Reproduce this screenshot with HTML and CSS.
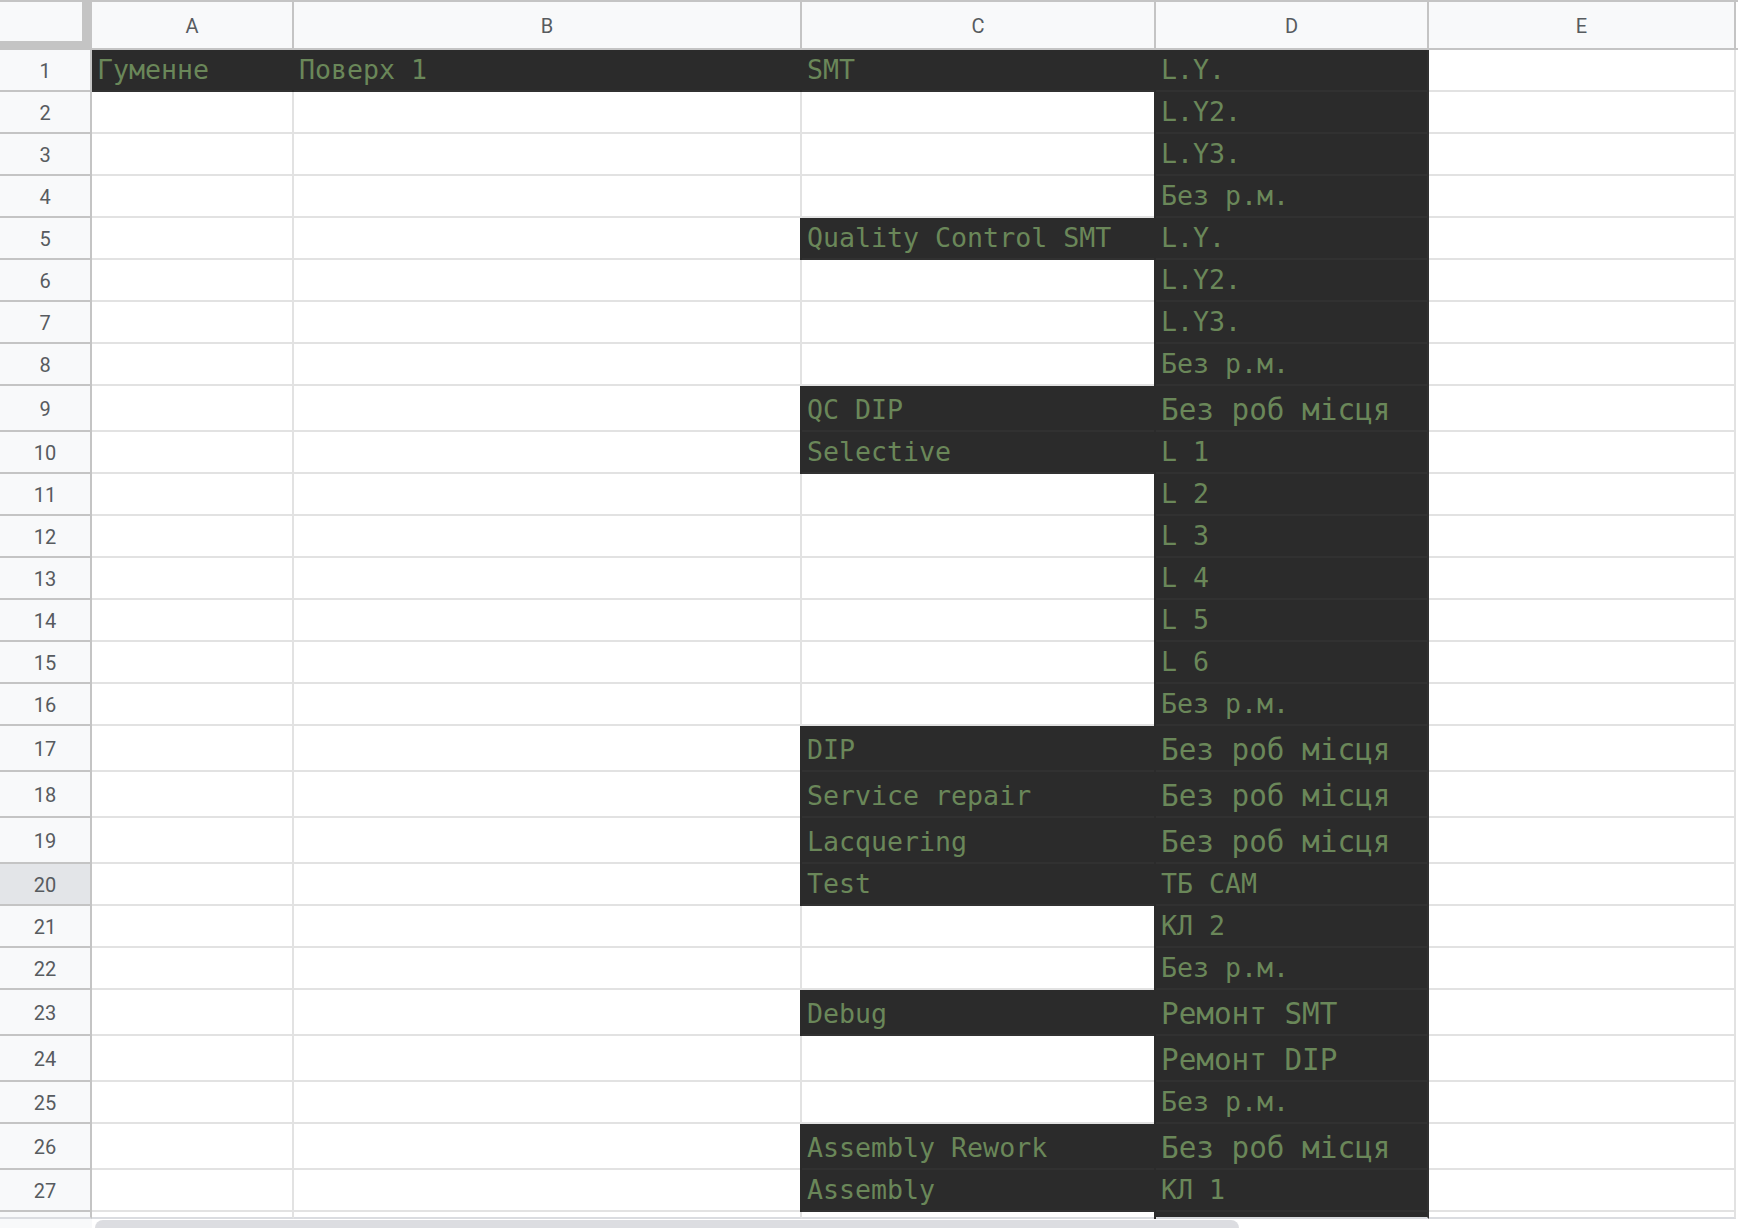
FILE: index.html
```html
<!DOCTYPE html>
<html lang="uk">
<head>
<meta charset="utf-8">
<title>Sheet</title>
<link rel="stylesheet" href="styles.css">
</head>
<body>
<div class="sheet">
  <div class="row head">
    <div class="corner"></div>
    <div class="colh">A</div>
    <div class="colh">B</div>
    <div class="colh">C</div>
    <div class="colh">D</div>
    <div class="colh">E</div>
    <div class="tail"></div>
  </div>

  <div class="row">
    <div class="rh">1</div>
    <div class="c dk first">Гуменне</div>
    <div class="c dk">Поверх 1</div>
    <div class="c dk">SMT</div>
    <div class="c dk">L.Y.</div>
    <div class="c"></div><div class="tail"></div>
  </div>
  <div class="row">
    <div class="rh">2</div>
    <div class="c"></div><div class="c"></div><div class="c"></div>
    <div class="c dk">L.Y2.</div>
    <div class="c"></div><div class="tail"></div>
  </div>
  <div class="row">
    <div class="rh">3</div>
    <div class="c"></div><div class="c"></div><div class="c"></div>
    <div class="c dk">L.Y3.</div>
    <div class="c"></div><div class="tail"></div>
  </div>
  <div class="row">
    <div class="rh">4</div>
    <div class="c"></div><div class="c"></div><div class="c"></div>
    <div class="c dk">Без р.м.</div>
    <div class="c"></div><div class="tail"></div>
  </div>
  <div class="row">
    <div class="rh">5</div>
    <div class="c"></div><div class="c"></div>
    <div class="c dk">Quality Control SMT</div>
    <div class="c dk">L.Y.</div>
    <div class="c"></div><div class="tail"></div>
  </div>
  <div class="row">
    <div class="rh">6</div>
    <div class="c"></div><div class="c"></div><div class="c"></div>
    <div class="c dk">L.Y2.</div>
    <div class="c"></div><div class="tail"></div>
  </div>
  <div class="row">
    <div class="rh">7</div>
    <div class="c"></div><div class="c"></div><div class="c"></div>
    <div class="c dk">L.Y3.</div>
    <div class="c"></div><div class="tail"></div>
  </div>
  <div class="row">
    <div class="rh">8</div>
    <div class="c"></div><div class="c"></div><div class="c"></div>
    <div class="c dk">Без р.м.</div>
    <div class="c"></div><div class="tail"></div>
  </div>
  <div class="row big">
    <div class="rh">9</div>
    <div class="c"></div><div class="c"></div>
    <div class="c dk">QC DIP</div>
    <div class="c dk lg">Без роб місця</div>
    <div class="c"></div><div class="tail"></div>
  </div>
  <div class="row">
    <div class="rh">10</div>
    <div class="c"></div><div class="c"></div>
    <div class="c dk">Selective</div>
    <div class="c dk">L 1</div>
    <div class="c"></div><div class="tail"></div>
  </div>
  <div class="row">
    <div class="rh">11</div>
    <div class="c"></div><div class="c"></div><div class="c"></div>
    <div class="c dk">L 2</div>
    <div class="c"></div><div class="tail"></div>
  </div>
  <div class="row">
    <div class="rh">12</div>
    <div class="c"></div><div class="c"></div><div class="c"></div>
    <div class="c dk">L 3</div>
    <div class="c"></div><div class="tail"></div>
  </div>
  <div class="row">
    <div class="rh">13</div>
    <div class="c"></div><div class="c"></div><div class="c"></div>
    <div class="c dk">L 4</div>
    <div class="c"></div><div class="tail"></div>
  </div>
  <div class="row">
    <div class="rh">14</div>
    <div class="c"></div><div class="c"></div><div class="c"></div>
    <div class="c dk">L 5</div>
    <div class="c"></div><div class="tail"></div>
  </div>
  <div class="row">
    <div class="rh">15</div>
    <div class="c"></div><div class="c"></div><div class="c"></div>
    <div class="c dk">L 6</div>
    <div class="c"></div><div class="tail"></div>
  </div>
  <div class="row">
    <div class="rh">16</div>
    <div class="c"></div><div class="c"></div><div class="c"></div>
    <div class="c dk">Без р.м.</div>
    <div class="c"></div><div class="tail"></div>
  </div>
  <div class="row big">
    <div class="rh">17</div>
    <div class="c"></div><div class="c"></div>
    <div class="c dk">DIP</div>
    <div class="c dk lg">Без роб місця</div>
    <div class="c"></div><div class="tail"></div>
  </div>
  <div class="row big">
    <div class="rh">18</div>
    <div class="c"></div><div class="c"></div>
    <div class="c dk">Service repair</div>
    <div class="c dk lg">Без роб місця</div>
    <div class="c"></div><div class="tail"></div>
  </div>
  <div class="row big">
    <div class="rh">19</div>
    <div class="c"></div><div class="c"></div>
    <div class="c dk">Lacquering</div>
    <div class="c dk lg">Без роб місця</div>
    <div class="c"></div><div class="tail"></div>
  </div>
  <div class="row">
    <div class="rh active">20</div>
    <div class="c"></div><div class="c"></div>
    <div class="c dk">Test</div>
    <div class="c dk">ТБ САМ</div>
    <div class="c"></div><div class="tail"></div>
  </div>
  <div class="row">
    <div class="rh">21</div>
    <div class="c"></div><div class="c"></div><div class="c"></div>
    <div class="c dk">КЛ 2</div>
    <div class="c"></div><div class="tail"></div>
  </div>
  <div class="row">
    <div class="rh">22</div>
    <div class="c"></div><div class="c"></div><div class="c"></div>
    <div class="c dk">Без р.м.</div>
    <div class="c"></div><div class="tail"></div>
  </div>
  <div class="row big">
    <div class="rh">23</div>
    <div class="c"></div><div class="c"></div>
    <div class="c dk">Debug</div>
    <div class="c dk lg">Ремонт SMT</div>
    <div class="c"></div><div class="tail"></div>
  </div>
  <div class="row big">
    <div class="rh">24</div>
    <div class="c"></div><div class="c"></div><div class="c"></div>
    <div class="c dk lg">Ремонт DIP</div>
    <div class="c"></div><div class="tail"></div>
  </div>
  <div class="row">
    <div class="rh">25</div>
    <div class="c"></div><div class="c"></div><div class="c"></div>
    <div class="c dk">Без р.м.</div>
    <div class="c"></div><div class="tail"></div>
  </div>
  <div class="row big">
    <div class="rh">26</div>
    <div class="c"></div><div class="c"></div>
    <div class="c dk">Assembly Rework</div>
    <div class="c dk lg">Без роб місця</div>
    <div class="c"></div><div class="tail"></div>
  </div>
  <div class="row">
    <div class="rh">27</div>
    <div class="c"></div><div class="c"></div>
    <div class="c dk">Assembly</div>
    <div class="c dk">КЛ 1</div>
    <div class="c"></div><div class="tail"></div>
  </div>
  <div class="row stub">
    <div class="rh"></div>
    <div class="c"></div><div class="c"></div><div class="c"></div>
    <div class="c dk"></div>
    <div class="c"></div><div class="tail"></div>
  </div>

  <div class="hscroll">
    <div class="hs-corner"></div>
    <div class="hs-track"><div class="hs-thumb"></div></div>
  </div>
</div>
</body>
</html>
```
FILE: styles.css
```css
* { box-sizing: border-box; }

html, body {
  margin: 0;
  padding: 0;
  background: #ffffff;
}

body {
  width: 1738px;
  height: 1228px;
  overflow: hidden;
}

.sheet {
  width: 1738px;
  display: flex;
  flex-direction: column;
}

.row {
  display: grid;
  grid-template-columns: 92px 202px 508px 354px 273px 307px 2px;
  height: 42px;
}

.row.big { height: 46px; }
.row.stub { height: 7px; }

.head {
  height: 50px;
  border-top: 2px solid #c4c4c4;
  border-bottom: 2px solid #c4c4c4;
  background: #f8f9fa;
}

.corner {
  background: #f8f9fa;
  border-right: 10px solid #c4c4c4;
  border-bottom: 9px solid #c4c4c4;
  margin-bottom: -2px;
}

.colh {
  border-right: 2px solid #c4c4c4;
  display: flex;
  align-items: center;
  justify-content: center;
  font-family: Roboto, "Liberation Sans", sans-serif;
  font-size: 20px;
  color: #575b5f;
  padding-top: 1px;
}

.tail { background: #ffffff; }

.rh {
  background: #f8f9fa;
  border-right: 2px solid #c4c4c4;
  border-bottom: 2px solid #c4c4c4;
  display: flex;
  align-items: center;
  justify-content: center;
  font-family: Roboto, "Liberation Sans", sans-serif;
  font-size: 20px;
  color: #575b5f;
  padding-top: 1px;
}

.rh.active { background: #e3e5e8; }

.c {
  border-right: 2px solid #e2e2e2;
  border-bottom: 2px solid #e2e2e2;
  display: flex;
  align-items: flex-end;
  padding: 0 4px 4px 5px;
  font-family: "DejaVu Sans Mono", "Liberation Mono", monospace;
  font-size: 26.6px;
  line-height: 1.16;
  color: #6a8759;
  white-space: nowrap;
  overflow: hidden;
}

.c.dk {
  background: #2b2b2b;
  border-right-color: #313131;
  border-bottom-color: #313131;
  box-shadow: -2px 0 0 #2b2b2b;
}

.c.dk.first { box-shadow: none; }

.c.lg {
  font-size: 29.3px;
  padding-bottom: 3px;
}

.stub .rh { border-bottom-color: #dadce0; }
.stub .c { border-bottom-color: #dadce0; }

.hscroll {
  display: flex;
  height: 9px;
  overflow: hidden;
}

.hs-corner {
  width: 92px;
  background: #f8f9fa;
}

.hs-track {
  flex: 1;
  padding-left: 3px;
  padding-top: 1px;
}

.hs-thumb {
  width: 1144px;
  height: 16px;
  border-radius: 8px;
  background: #dcdde1;
}
```
